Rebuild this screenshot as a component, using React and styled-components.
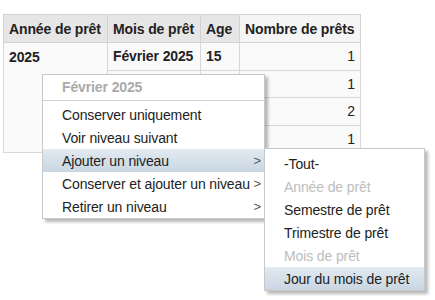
import React from "react";
import styled, { createGlobalStyle } from "styled-components";

const Global = createGlobalStyle`
  html, body { margin: 0; padding: 0; background: #fff; }
  body {
    font-family: "Liberation Sans", Arial, sans-serif;
    font-size: 14px;
    letter-spacing: -0.12px;
    color: #222;
  }
`;

const Page = styled.div`
  position: relative;
  width: 435px;
  height: 300px;
  padding: 14px 0 0 3px;
  box-sizing: border-box;
`;

const Table = styled.table`
  border-collapse: collapse;
  table-layout: fixed;
  border: 1px solid #d2d2d2;
`;

const Th = styled.th`
  width: ${(p) => p.$w}px;
  height: 28px;
  padding: 0 5px;
  box-sizing: border-box;
  border: 1px solid #d2d2d2;
  background: ${(p) => (p.$measure ? "#f5f5f5" : "#e6e6e6")};
  font-weight: bold;
  text-align: left;
  color: #222;
  white-space: nowrap;
`;

const Td = styled.td`
  height: 27.5px;
  padding: 0 5px;
  box-sizing: border-box;
  border: 1px solid #d8d8d8;
  background: #fafafa;
  font-weight: ${(p) => (p.$bold ? "bold" : "normal")};
  text-align: ${(p) => (p.$right ? "right" : "left")};
  vertical-align: ${(p) => (p.$top ? "top" : "middle")};
  padding-top: ${(p) => (p.$top ? "6px" : "0")};
  white-space: nowrap;
`;

const Menu = styled.div`
  position: absolute;
  left: ${(p) => p.$x}px;
  top: ${(p) => p.$y}px;
  width: ${(p) => p.$w}px;
  box-sizing: border-box;
  background: #fff;
  border: 1px solid #c8c8c8;
  box-shadow: 3px 3px 3px rgba(0, 0, 0, 0.28);
  padding: ${(p) => p.$pt}px 0 0;
`;

const MenuHeader = styled.div`
  height: 25px;
  line-height: 25px;
  padding-left: 19px;
  font-weight: bold;
  color: #aaa;
  border-bottom: 1px solid #d0d0d0;
  margin-bottom: 2px;
`;

const Item = styled.div`
  display: flex;
  justify-content: space-between;
  align-items: center;
  height: 23px;
  padding: 0 3px 0 19px;
  color: ${(p) => (p.$disabled ? "#bdbdbd" : "#222")};
  background: ${(p) =>
    p.$active ? "linear-gradient(to bottom, #e2eaf1, #c9d6e2)" : "transparent"};
  white-space: nowrap;
`;

const Arrow = styled.span`
  color: #555;
  font-size: 13px;
`;

const mainItems = [
  { label: "Conserver uniquement" },
  { label: "Voir niveau suivant" },
  { label: "Ajouter un niveau", sub: true, active: true },
  { label: "Conserver et ajouter un niveau", sub: true },
  { label: "Retirer un niveau", sub: true },
];

const subItems = [
  { label: "-Tout-" },
  { label: "Année de prêt", disabled: true },
  { label: "Semestre de prêt" },
  { label: "Trimestre de prêt" },
  { label: "Mois de prêt", disabled: true },
  { label: "Jour du mois de prêt", active: true },
];

export default function App() {
  return (
    <Page>
      <Global />
      <Table>
        <thead>
          <tr>
            <Th $w={104}>Année de prêt</Th>
            <Th $w={93}>Mois de prêt</Th>
            <Th $w={39}>Age</Th>
            <Th $w={121} $measure>Nombre de prêts</Th>
          </tr>
        </thead>
        <tbody>
          <tr>
            <Td $bold rowSpan={4} $top>2025</Td>
            <Td $bold>Février 2025</Td>
            <Td $bold>15</Td>
            <Td $right>1</Td>
          </tr>
          <tr>
            <Td />
            <Td />
            <Td $right>1</Td>
          </tr>
          <tr>
            <Td />
            <Td />
            <Td $right>2</Td>
          </tr>
          <tr>
            <Td />
            <Td />
            <Td $right>1</Td>
          </tr>
        </tbody>
      </Table>

      <Menu $x={42} $y={74} $w={223} $pt={0}>
        <MenuHeader>Février 2025</MenuHeader>
        {mainItems.map((it) => (
          <Item key={it.label} $active={it.active}>
            <span>{it.label}</span>
            {it.sub && <Arrow>&gt;</Arrow>}
          </Item>
        ))}
      </Menu>

      <Menu $x={264} $y={148} $w={161} $pt={3}>
        {subItems.map((it) => (
          <Item key={it.label} $active={it.active} $disabled={it.disabled}>
            <span>{it.label}</span>
          </Item>
        ))}
      </Menu>
    </Page>
  );
}
